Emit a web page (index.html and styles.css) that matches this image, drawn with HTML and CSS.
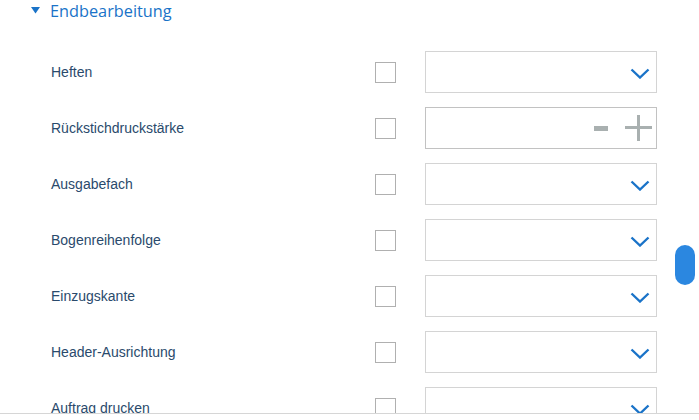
FILE: index.html
```html
<!DOCTYPE html>
<html lang="de">
<head>
<meta charset="utf-8">
<link rel="stylesheet" href="styles.css">
</head>
<body>
<div class="panel">
  <div class="section-head">
    <svg class="caret" width="9" height="7" viewBox="0 0 9 7"><polygon points="0,0 9,0 4.5,6.5" fill="#1a73c8"/></svg>
    <span class="title">Endbearbeitung</span>
  </div>
  <div class="rows">
    <div class="row"><span class="label">Heften</span><span class="check"></span><div class="field"><svg class="chev" width="20" height="11" viewBox="0 0 20 11"><polyline points="1.5,1.5 10,9.5 18.5,1.5" fill="none" stroke="#1a73c8" stroke-width="2.4"/></svg></div></div>
    <div class="row"><span class="label">Rückstichdruckstärke</span><span class="check"></span><div class="field spin"><span class="minus"></span><span class="plus"></span></div></div>
    <div class="row"><span class="label">Ausgabefach</span><span class="check"></span><div class="field"><svg class="chev" width="20" height="11" viewBox="0 0 20 11"><polyline points="1.5,1.5 10,9.5 18.5,1.5" fill="none" stroke="#1a73c8" stroke-width="2.4"/></svg></div></div>
    <div class="row"><span class="label">Bogenreihenfolge</span><span class="check"></span><div class="field"><svg class="chev" width="20" height="11" viewBox="0 0 20 11"><polyline points="1.5,1.5 10,9.5 18.5,1.5" fill="none" stroke="#1a73c8" stroke-width="2.4"/></svg></div></div>
    <div class="row"><span class="label">Einzugskante</span><span class="check"></span><div class="field"><svg class="chev" width="20" height="11" viewBox="0 0 20 11"><polyline points="1.5,1.5 10,9.5 18.5,1.5" fill="none" stroke="#1a73c8" stroke-width="2.4"/></svg></div></div>
    <div class="row"><span class="label">Header-Ausrichtung</span><span class="check"></span><div class="field"><svg class="chev" width="20" height="11" viewBox="0 0 20 11"><polyline points="1.5,1.5 10,9.5 18.5,1.5" fill="none" stroke="#1a73c8" stroke-width="2.4"/></svg></div></div>
    <div class="row"><span class="label">Auftrag drucken</span><span class="check"></span><div class="field"><svg class="chev" width="20" height="11" viewBox="0 0 20 11"><polyline points="1.5,1.5 10,9.5 18.5,1.5" fill="none" stroke="#1a73c8" stroke-width="2.4"/></svg></div></div>
  </div>
  <div class="thumb"></div>
</div>
</body>
</html>
```
FILE: styles.css
```css
html, body {
  margin: 0;
  padding: 0;
  background: #fff;
}
.panel {
  position: relative;
  width: 699px;
  height: 413px;
  overflow: hidden;
  border-bottom: 1px solid #d6d6d6;
  font-family: "Liberation Sans", Arial, sans-serif;
}
.section-head {
  display: flex;
  align-items: center;
  height: 22px;
  padding-left: 31px;
}
.caret {
  display: block;
  margin-right: 10px;
  margin-top: -1px;
}
.title {
  font-family: "Open Sans", sans-serif;
  font-size: 16.3px;
  color: #1a73c8;
  line-height: 22px;
}
.rows {
  display: flex;
  flex-direction: column;
  gap: 14px;
  padding-top: 29px;
}
.row {
  display: flex;
  align-items: center;
  height: 42px;
  padding-left: 51px;
}
.label {
  width: 324px;
  font-size: 14px;
  color: #2a4a6c;
}
.check {
  width: 19px;
  height: 19px;
  border: 1px solid #b0b0b0;
  margin-right: 29px;
  box-sizing: content-box;
}
.field {
  height: 40px;
  border: 1px solid #d4d4d4;
  display: flex;
  align-items: center;
  justify-content: flex-end;
  padding-right: 6px;
  box-sizing: content-box;
  width: 224px;
}
.chev {
  display: block;
  margin-top: 2px;
}
.spin {
  border-color: #c2c2c2;
  padding-right: 4px;
  width: 226px;
}
.minus {
  width: 14px;
  height: 5px;
  background: #a9b0b0;
  margin-right: 17px;
}
.plus {
  position: relative;
  width: 27px;
  height: 26px;
}
.plus::before, .plus::after {
  content: "";
  position: absolute;
  background: #a9b0b0;
}
.plus::before {
  left: 0;
  right: 0;
  top: 11px;
  height: 3px;
}
.plus::after {
  top: 0;
  bottom: 0;
  left: 12px;
  width: 3px;
}
.thumb {
  position: absolute;
  left: 675px;
  top: 245px;
  width: 20px;
  height: 40px;
  border-radius: 10px;
  background: #2b87e0;
}
```
